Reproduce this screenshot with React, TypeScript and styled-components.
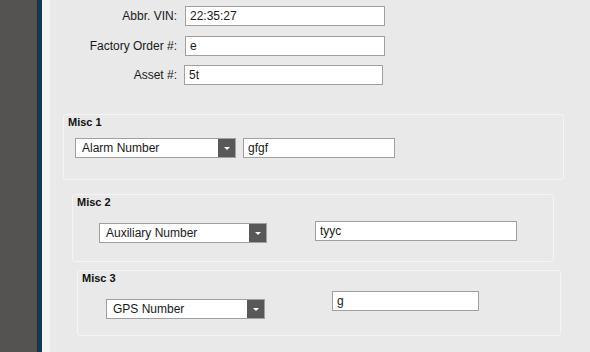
import React from "react";
import styled, { createGlobalStyle } from "styled-components";

const GlobalStyle = createGlobalStyle`
  html, body {
    margin: 0;
    padding: 0;
    background: #e9e9e9;
  }
  body {
    font-family: "Liberation Sans", Arial, sans-serif;
    font-size: 12px;
    color: #1a1a1a;
  }
`;

const Page = styled.div`
  display: flex;
  height: 352px;
  overflow: hidden;
`;

const Sidebar = styled.div`
  width: 37px;
  flex-shrink: 0;
  background: #545351;
  border-right: 1px solid #2b2b2b;
`;

const Accent = styled.div`
  width: 4px;
  flex-shrink: 0;
  background: #0f3b57;
`;

const Gutter = styled.div`
  width: 8px;
  flex-shrink: 0;
  background: #f3f3f3;
`;

const Content = styled.div`
  flex: 1;
  background: #e9e9e9;
  padding-top: 6px;
  display: flex;
  flex-direction: column;
`;

const FormGrid = styled.div`
  display: grid;
  grid-template-columns: 127px 200px;
  column-gap: 8px;
  row-gap: 9.5px;
  align-items: center;
`;

const Label = styled.label`
  text-align: right;
  font-size: 12px;
  line-height: 20px;
  color: #1a1a1a;
`;

const TextInput = styled.input<{ $w?: number; $mt?: number; $ml?: number }>`
  box-sizing: border-box;
  width: ${(p) => p.$w ?? 200}px;
  height: 20px;
  margin: ${(p) => p.$mt ?? 0}px 0 0 ${(p) => p.$ml ?? 0}px;
  padding: 0 4px;
  border: 1px solid #a0a0a0;
  background: #fff;
  font-family: "Liberation Sans", Arial, sans-serif;
  font-size: 12px;
  color: #1a1a1a;
  outline: none;
  flex-shrink: 0;
`;

const Group = styled.div<{ $ml: number; $mt: number; $w: number; $h: number }>`
  box-sizing: border-box;
  margin: ${(p) => p.$mt}px 0 0 ${(p) => p.$ml}px;
  width: ${(p) => p.$w}px;
  height: ${(p) => p.$h}px;
  padding: 1px 4px 0;
  border: 1px solid #f5f5f5;
  border-radius: 3px;
`;

const GroupTitle = styled.div`
  font-weight: bold;
  font-size: 11px;
  line-height: 13px;
  color: #111;
`;

const Row = styled.div<{ $pl: number }>`
  display: flex;
  align-items: flex-start;
  padding-left: ${(p) => p.$pl}px;
`;

const SelectBox = styled.div<{ $w: number; $mt: number }>`
  box-sizing: border-box;
  display: flex;
  width: ${(p) => p.$w}px;
  height: 20px;
  margin-top: ${(p) => p.$mt}px;
  border: 1px solid #a0a0a0;
  background: #fff;
  flex-shrink: 0;
`;

const SelectText = styled.span`
  flex: 1;
  padding-left: 6px;
  line-height: 18px;
  font-size: 12px;
  color: #1a1a1a;
  white-space: nowrap;
  overflow: hidden;
`;

const SelectButton = styled.span`
  width: 17px;
  display: flex;
  align-items: center;
  justify-content: center;
  background: #585858;

  &::after {
    content: "";
    border-left: 3px solid transparent;
    border-right: 3px solid transparent;
    border-top: 3px solid #fff;
    margin-top: 1px;
  }
`;

type MiscProps = {
  title: string;
  option: string;
  value: string;
  box: { ml: number; mt: number; w: number; h: number };
  pl: number;
  selectW: number;
  selectMt: number;
  inputW: number;
  inputMt: number;
  gap: number;
};

const MiscGroup = ({ title, option, value, box, pl, selectW, selectMt, inputW, inputMt, gap }: MiscProps) => (
  <Group $ml={box.ml} $mt={box.mt} $w={box.w} $h={box.h}>
    <GroupTitle>{title}</GroupTitle>
    <Row $pl={pl}>
      <SelectBox $w={selectW} $mt={selectMt}>
        <SelectText>{option}</SelectText>
        <SelectButton />
      </SelectBox>
      <TextInput defaultValue={value} $w={inputW} $mt={inputMt} $ml={gap} />
    </Row>
  </Group>
);

export default function App() {
  return (
    <>
      <GlobalStyle />
      <Page>
        <Sidebar />
        <Accent />
        <Gutter />
        <Content>
          <FormGrid>
            <Label>Abbr. VIN:</Label>
            <TextInput defaultValue="22:35:27" />
            <Label>Factory Order #:</Label>
            <TextInput defaultValue="e" />
            <Label>Asset #:</Label>
            <TextInput defaultValue="5t" $w={199} $ml={-1} />
          </FormGrid>

          <MiscGroup
            title="Misc 1"
            option="Alarm Number"
            value="gfgf"
            box={{ ml: 13, mt: 29, w: 501, h: 66 }}
            pl={7}
            selectW={161}
            selectMt={9}
            inputW={152}
            inputMt={9}
            gap={7}
          />
          <MiscGroup
            title="Misc 2"
            option="Auxiliary Number"
            value="tyyc"
            box={{ ml: 22, mt: 14, w: 482, h: 68 }}
            pl={22}
            selectW={168}
            selectMt={14}
            inputW={202}
            inputMt={12}
            gap={48}
          />
          <MiscGroup
            title="Misc 3"
            option="GPS Number"
            value="g"
            box={{ ml: 27, mt: 8, w: 484, h: 66 }}
            pl={24}
            selectW={159}
            selectMt={14}
            inputW={147}
            inputMt={6}
            gap={67}
          />
        </Content>
      </Page>
    </>
  );
}
